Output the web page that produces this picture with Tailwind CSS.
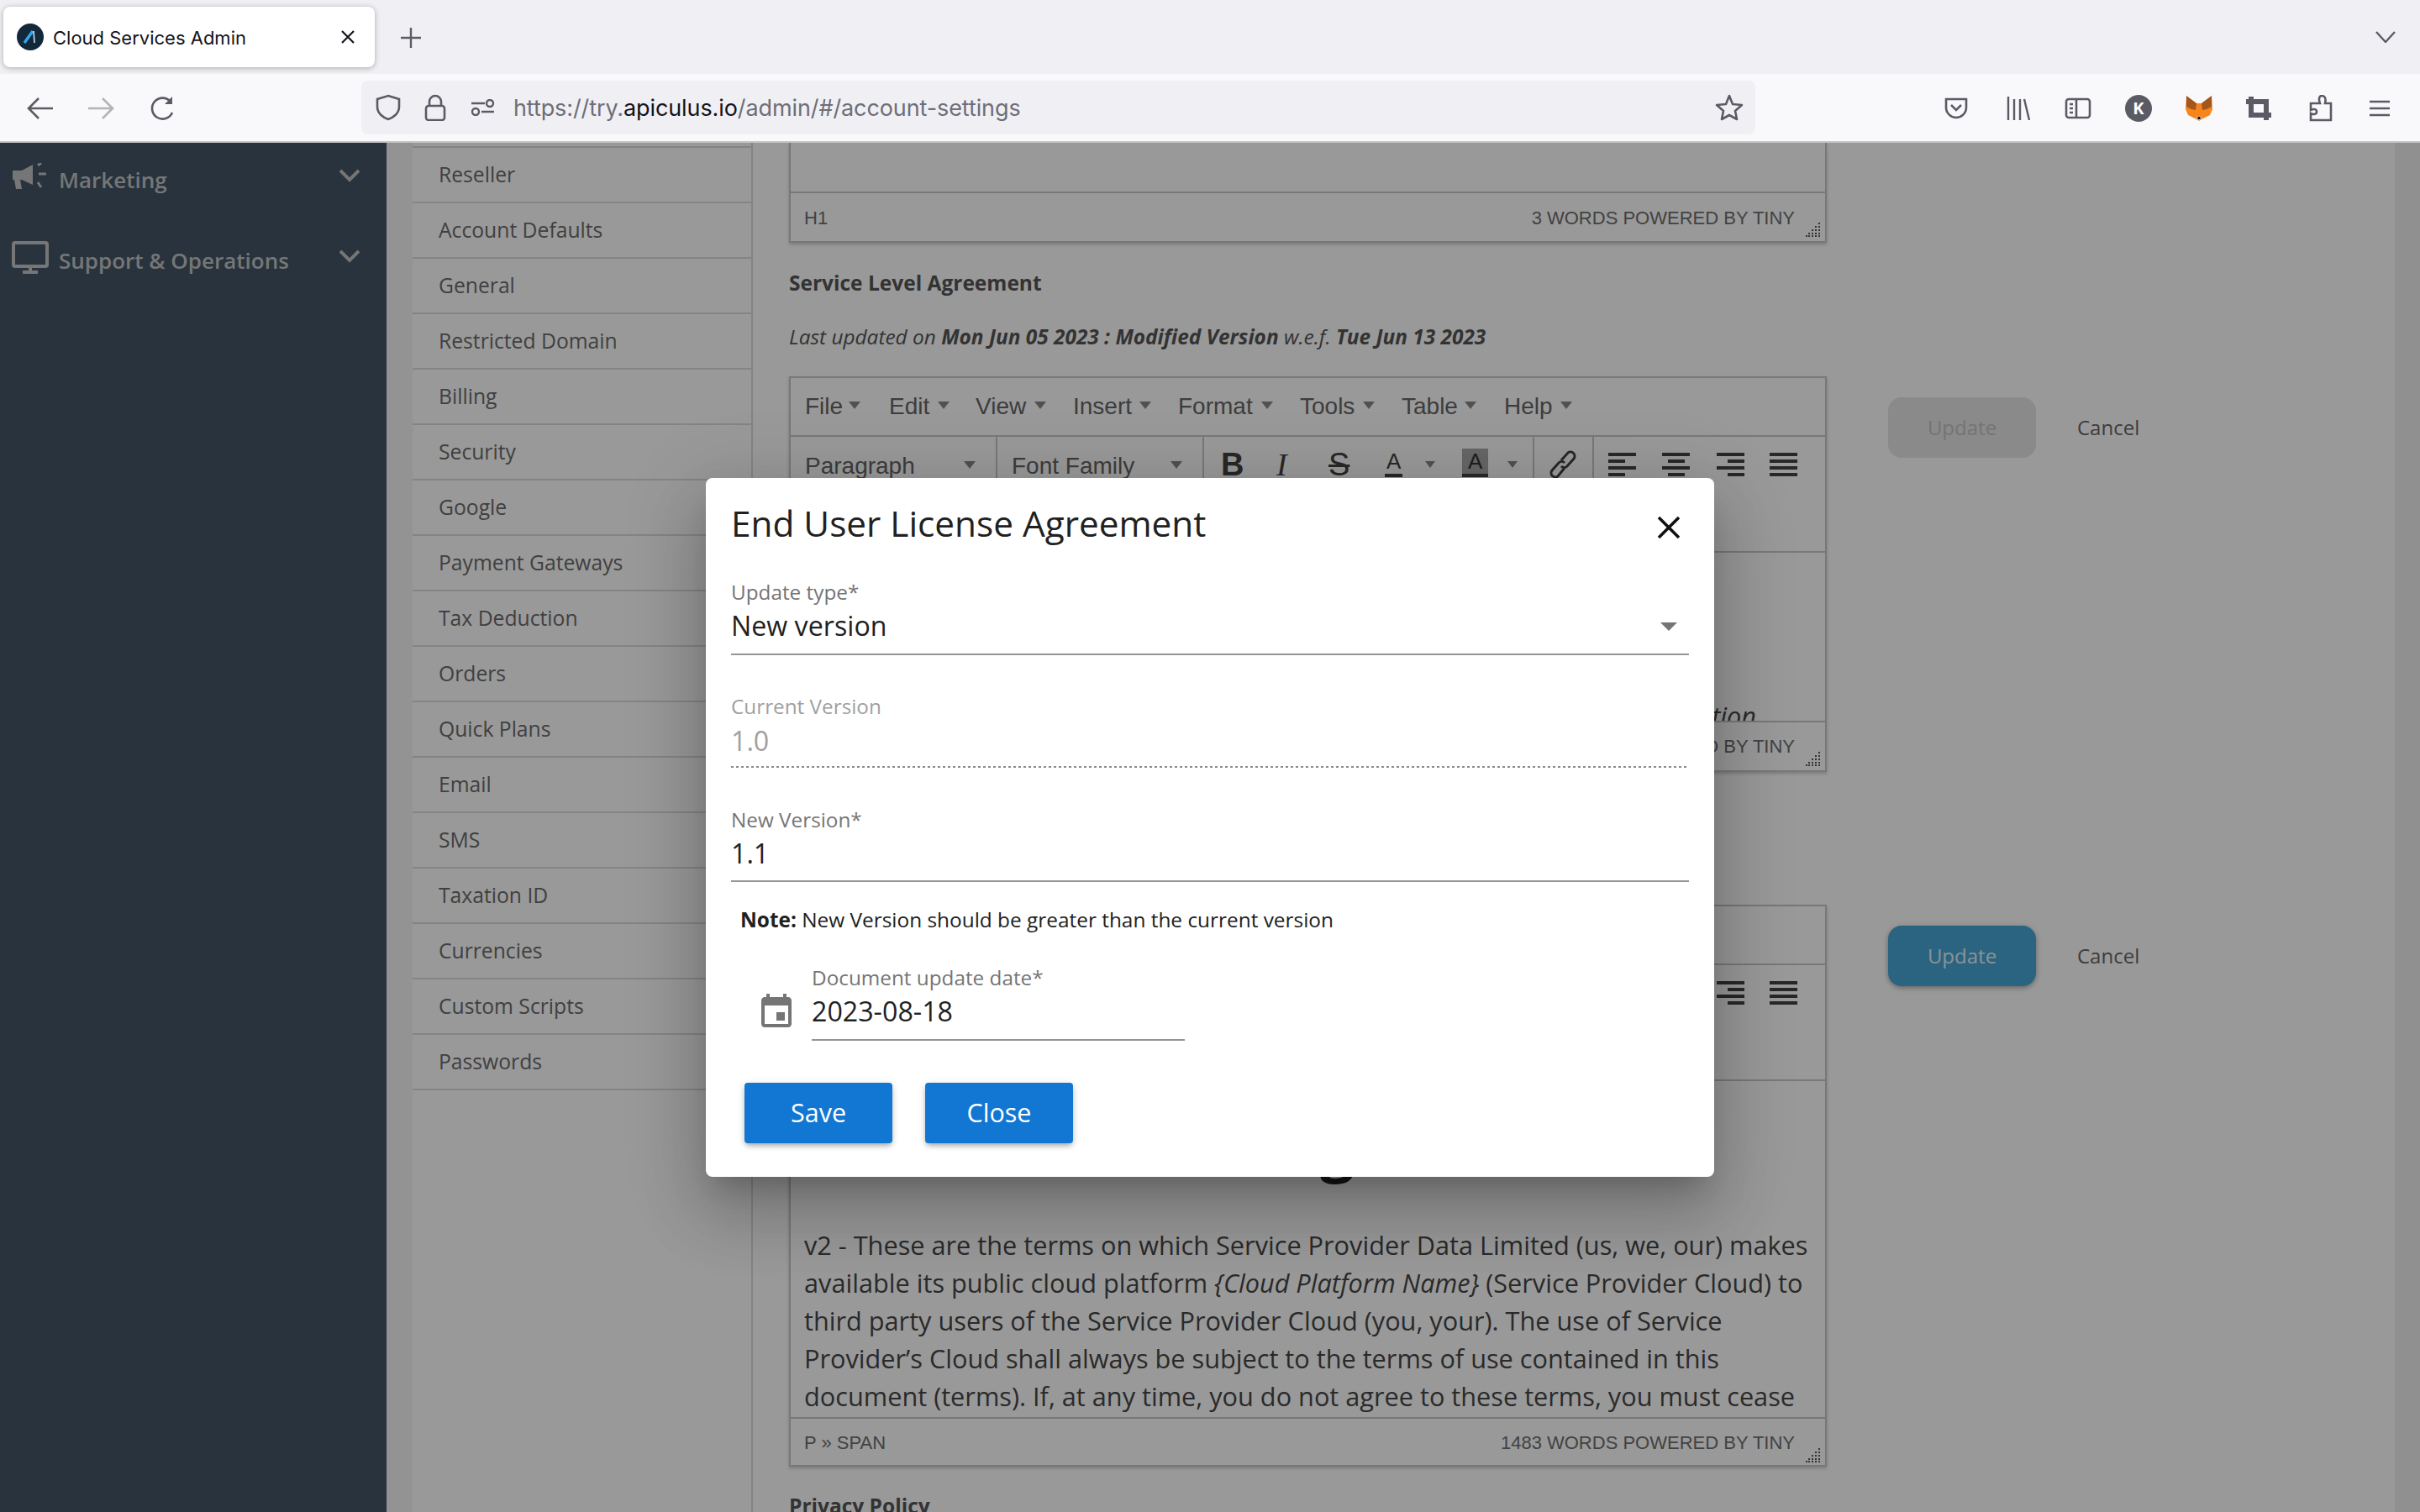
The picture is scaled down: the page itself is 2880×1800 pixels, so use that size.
<!DOCTYPE html>
<html><head><meta charset="utf-8"><script src="https://cdn.jsdelivr.net/npm/@tailwindcss/browser@4"></script></head>
<body class="w-[2880px] h-[1800px] overflow-hidden bg-white font-['Open_Sans',sans-serif]">
<!-- tab strip -->
<div class="h-[88px] bg-[#f0f0f4] flex items-start relative font-['Inter',sans-serif]">
  <div class="ml-[4px] mt-[8px] w-[442px] h-[72px] rounded-[8px] bg-white shadow-[0_1px_6px_rgba(0,0,0,.3)] flex items-center pl-[16px]">
    <svg class="w-[32px] h-[32px]" viewBox="0 0 32 32"><circle cx="16" cy="16" r="16" fill="#14283c"/><path d="M9 23 L19 9" fill="none" stroke="#2fa8ec" stroke-width="3.4"/><path d="M20 9 L21 23" fill="none" stroke="#bfe4f8" stroke-width="1.6"/></svg>
    <span class="ml-[11px] mt-[2px] text-[22px] text-[#15141a] whitespace-nowrap">Cloud Services Admin</span>
    <svg class="ml-auto mr-[22px] w-[20px] h-[20px]" viewBox="0 0 20 20"><path d="M3 3 17 17M17 3 3 17" stroke="#15141a" stroke-width="2.2"/></svg>
  </div>
  <svg class="ml-[31px] mt-[33px] w-[24px] h-[24px]" viewBox="0 0 24 24"><path d="M12 0V24M0 12H24" stroke="#5b5b66" stroke-width="2.4"/></svg>
  <svg class="absolute left-[2827px] top-[37px] w-[24px] h-[14px]" viewBox="0 0 24 14"><path d="M1 1 12 13 23 1" fill="none" stroke="#5b5b66" stroke-width="2.4"/></svg>
</div>
<!-- nav bar -->
<div class="h-[82px] pt-[2px] bg-[#f9f9fb] border-b-2 border-[#c4c4c4] flex items-center text-[#5b5b66]">
  <svg class="ml-[32px] w-[32px] h-[28px]" viewBox="0 0 32 28" fill="none" stroke="#5b5b66" stroke-width="2.6"><path d="M31 14H2M14 2 2 14l12 12"/></svg>
  <svg class="ml-[40px] w-[32px] h-[28px]" viewBox="0 0 32 28" fill="none" stroke="#b3b3b8" stroke-width="2.6"><path d="M1 14H30M18 2 30 14 18 26"/></svg>
  <svg class="ml-[42px] w-[32px] h-[32px]" viewBox="0 0 32 32" fill="none" stroke="#5b5b66" stroke-width="2.6"><path d="M27 21A12.5 12.5 0 1 1 25 8"/><path d="M27 2V11H18" fill="#5b5b66" stroke="none"/></svg>
  <div class="ml-[220px] -mt-[2px] w-[1659px] h-[64px] rounded-[8px] bg-[#f0f0f4] flex items-center relative">
    <svg class="ml-[17px] w-[30px] h-[32px]" viewBox="0 0 30 32" fill="none" stroke="#5b5b66" stroke-width="2.6"><path d="M15 2 28 6V15C28 23 21 28 15 30 9 28 2 23 2 15V6Z"/></svg>
    <svg class="ml-[28px] w-[26px] h-[32px]" viewBox="0 0 26 32" fill="none" stroke="#5b5b66" stroke-width="2.6"><rect x="2" y="14" width="22" height="17" rx="3"/><path d="M6 14V9a7 7 0 0 1 14 0v5"/></svg>
    <svg class="ml-[29px] w-[29px] h-[20px]" viewBox="0 0 29 20" fill="none" stroke="#5b5b66" stroke-width="2.4"><path d="M1 5H17M13 15H28"/><circle cx="23" cy="5" r="4"/><circle cx="6" cy="15" r="4"/></svg>
    <span class="ml-[22px] mt-[2px] text-[27px] tracking-[-.1px] whitespace-nowrap text-[#6e6e78] font-['Inter',sans-serif]">https://try.<span class="text-[#15141a]">apiculus.io</span>/admin/#/account-settings</span>
    <svg class="absolute left-[1611px] top-[16px] w-[34px] h-[32px]" viewBox="0 0 34 32" fill="none" stroke="#5b5b66" stroke-width="2.6" stroke-linejoin="round"><path d="M17 2 21 12 32 13 24 20 26 30 17 25 8 30 10 20 2 13 13 12Z"/></svg>
  </div>
  <svg class="ml-[225px] w-[28px] h-[26px]" viewBox="0 0 28 26" fill="none" stroke="#5b5b66" stroke-width="2.6"><path d="M2 2H26V12C26 19 20 24 14 24 8 24 2 19 2 12Z"/><path d="M8 9 14 15 20 9"/></svg>
  <svg class="ml-[46px] w-[28px] h-[28px]" viewBox="0 0 28 28" fill="none" stroke="#5b5b66" stroke-width="2.4"><path d="M2 0V28M9 3V28M16 3V28M21 3 27 28"/></svg>
  <svg class="ml-[41px] w-[32px] h-[26px]" viewBox="0 0 32 26" fill="none" stroke="#5b5b66" stroke-width="2.6"><rect x="2" y="2" width="28" height="22" rx="3"/><path d="M14 2V24"/><path d="M6 8H10M6 13H10M6 18H10"/></svg>
  <div class="ml-[40px] w-[32px] h-[32px] rounded-full bg-[#5b5b66] text-white text-[20px] font-bold flex items-center justify-center">K</div>
  <svg class="ml-[40px] w-[32px] h-[30px]" viewBox="0 0 32 30"><path d="M1 0 13 9H19L31 0 32 16 29 23 21 27 16 30 11 27 3 23 0 16Z" fill="#f6851b"/><path d="M1 0 13 9 12 17 7 16 1 13ZM31 0 19 9 20 17 25 16 31 13Z" fill="#a3561e"/><path d="M12 26 16 30 20 26 16 24Z" fill="#d7c1b3"/><path d="M14.5 25H17.5V28H14.5Z" fill="#111"/></svg>
  <svg class="ml-[40px] w-[30px] h-[28px]" viewBox="0 0 30 28" fill="none" stroke="#5b5b66" stroke-width="6"><path d="M0 6H24V28M6 0V22H30"/></svg>
  <svg class="ml-[45px] w-[28px] h-[32px]" viewBox="0 0 28 32" fill="none" stroke="#5b5b66" stroke-width="2.6"><path d="M2 30H26V10H19C21 2 17 1 15 1 12 1 11 5 13 10H2V18C6 16 9 17 9 20 9 23 6 24 2 22Z"/></svg>
  <svg class="ml-[43px] w-[26px] h-[20px]" viewBox="0 0 26 20" stroke="#5b5b66" stroke-width="2.6"><path d="M1 2H25M1 10H25M1 18H25"/></svg>
</div>
<!-- page -->
<div class="relative h-[1630px] overflow-hidden flex bg-white">
  <aside class="w-[460px] shrink-0 bg-[#445566] text-[#c5c5c5] text-[26px] font-semibold">
    <div class="h-[80px] flex items-center relative pl-[70px] mt-[4px]">
      <svg class="absolute left-[15px] top-[20px] w-[42px] h-[32px]" viewBox="0 0 42 32" fill="#c5c5c5"><path d="M0 9H11L24 2V26L11 20H9L11 31H4L2 20H0Z"/><path d="M30 3 34 0M31 13H40M30 23 34 29" stroke="#c5c5c5" stroke-width="3"/></svg>
      Marketing
      <svg class="absolute left-[404px] top-[27px] w-[24px] h-[16px]" viewBox="0 0 24 16" fill="none" stroke="#c5c5c5" stroke-width="4"><path d="M1 2 12 13 23 2"/></svg>
    </div>
    <div class="h-[80px] flex items-center relative pl-[70px] mt-[16px]">
      <svg class="absolute left-[14px] top-[17px] w-[44px] h-[39px]" viewBox="0 0 44 39" fill="none" stroke="#c5c5c5" stroke-width="4"><rect x="2" y="2" width="40" height="28" rx="2"/><path d="M22 30V37M13 37H31"/></svg>
      <span>Support &amp; Operations</span>
      <svg class="absolute left-[404px] top-[27px] w-[24px] h-[16px]" viewBox="0 0 24 16" fill="none" stroke="#c5c5c5" stroke-width="4"><path d="M1 2 12 13 23 2"/></svg>
    </div>
  </aside>
  <div class="w-[31px] shrink-0 bg-[#f6f6f6]"></div>
  <nav class="w-[405px] shrink-0 border-r-2 border-[#dcdcdc] text-[24.7px] text-[#6b6b6b] pt-[4px]">
    <div class="border-t-2 border-[#dcdcdc]"></div>
    <div class="h-[66px] flex items-center pl-[31px] border-b-2 border-[#dcdcdc]">Reseller</div>
    <div class="h-[66px] flex items-center pl-[31px] border-b-2 border-[#dcdcdc]">Account Defaults</div>
    <div class="h-[66px] flex items-center pl-[31px] border-b-2 border-[#dcdcdc]">General</div>
    <div class="h-[66px] flex items-center pl-[31px] border-b-2 border-[#dcdcdc]">Restricted Domain</div>
    <div class="h-[66px] flex items-center pl-[31px] border-b-2 border-[#dcdcdc]">Billing</div>
    <div class="h-[66px] flex items-center pl-[31px] border-b-2 border-[#dcdcdc]">Security</div>
    <div class="h-[66px] flex items-center pl-[31px] border-b-2 border-[#dcdcdc]">Google</div>
    <div class="h-[66px] flex items-center pl-[31px] border-b-2 border-[#dcdcdc]">Payment Gateways</div>
    <div class="h-[66px] flex items-center pl-[31px] border-b-2 border-[#dcdcdc]">Tax Deduction</div>
    <div class="h-[66px] flex items-center pl-[31px] border-b-2 border-[#dcdcdc]">Orders</div>
    <div class="h-[66px] flex items-center pl-[31px] border-b-2 border-[#dcdcdc]">Quick Plans</div>
    <div class="h-[66px] flex items-center pl-[31px] border-b-2 border-[#dcdcdc]">Email</div>
    <div class="h-[66px] flex items-center pl-[31px] border-b-2 border-[#dcdcdc]">SMS</div>
    <div class="h-[66px] flex items-center pl-[31px] border-b-2 border-[#dcdcdc]">Taxation ID</div>
    <div class="h-[66px] flex items-center pl-[31px] border-b-2 border-[#dcdcdc]">Currencies</div>
    <div class="h-[66px] flex items-center pl-[31px] border-b-2 border-[#dcdcdc]">Custom Scripts</div>
    <div class="h-[66px] flex items-center pl-[31px] border-b-2 border-[#dcdcdc]">Passwords</div>
  </nav>
  <main class="flex-1 pl-[43px] text-[#555]">
    <!-- editor 1 tail -->
    <div class="w-[1235px] h-[119px] border-x-2 border-b-2 border-[#c8c8c8] shadow-[0_2px_4px_rgba(0,0,0,.2)] flex flex-col">
      <div class="h-[58px]"></div>
      <div class="h-[59px] pt-[2px] border-t-2 border-[#c8c8c8] flex items-center pl-[16px] pr-[36px] justify-between font-['Liberation_Sans',sans-serif] text-[22px] text-[#6e6e6e] relative">
        <span>H1</span><span>3 WORDS POWERED BY TINY</span>
        <svg class="absolute right-[4px] bottom-[4px] w-[20px] h-[20px]" viewBox="0 0 20 20" fill="#555"><path d="M16 2h2v2h-2zM16 6h2v2h-2zM12 6h2v2h-2zM16 10h2v2h-2zM12 10h2v2h-2zM8 10h2v2H8zM16 14h2v2h-2zM12 14h2v2h-2zM8 14h2v2H8zM4 14h2v2H4zM16 17h2v2h-2zM12 17h2v2h-2zM8 17h2v2H8zM4 17h2v2H4zM1 17h2v2H1z"/></svg>
      </div>
    </div>
    <div class="mt-[31px] h-[34px] leading-[34px] text-[24.5px] font-bold">Service Level Agreement</div>
    <div class="mt-[30px] h-[34px] leading-[34px] text-[24.4px] italic">Last updated on <b>Mon Jun 05 2023 : Modified Version</b> w.e.f. <b>Tue Jun 13 2023</b></div>
    <!-- editor 2 -->
    <div class="mt-[30px] flex items-start">
      <div class="w-[1235px] h-[471px] border-2 border-[#c8c8c8] shadow-[0_2px_4px_rgba(0,0,0,.2)] flex flex-col font-['Liberation_Sans',sans-serif] text-[#6e6e6e]">
        <div class="h-[68px] shrink-0 flex items-center text-[28px] text-[#666] relative">
          <span class="absolute left-[17px]">File</span><i class="absolute left-[69px] top-[28px] border-x-[7px] border-t-[9px] border-x-transparent border-t-[#888]"></i>
          <span class="absolute left-[117px]">Edit</span><i class="absolute left-[175px] top-[28px] border-x-[7px] border-t-[9px] border-x-transparent border-t-[#888]"></i>
          <span class="absolute left-[220px]">View</span><i class="absolute left-[290px] top-[28px] border-x-[7px] border-t-[9px] border-x-transparent border-t-[#888]"></i>
          <span class="absolute left-[336px]">Insert</span><i class="absolute left-[415px] top-[28px] border-x-[7px] border-t-[9px] border-x-transparent border-t-[#888]"></i>
          <span class="absolute left-[461px]">Format</span><i class="absolute left-[560px] top-[28px] border-x-[7px] border-t-[9px] border-x-transparent border-t-[#888]"></i>
          <span class="absolute left-[606px]">Tools</span><i class="absolute left-[681px] top-[28px] border-x-[7px] border-t-[9px] border-x-transparent border-t-[#888]"></i>
          <span class="absolute left-[727px]">Table</span><i class="absolute left-[802px] top-[28px] border-x-[7px] border-t-[9px] border-x-transparent border-t-[#888]"></i>
          <span class="absolute left-[849px]">Help</span><i class="absolute left-[916px] top-[28px] border-x-[7px] border-t-[9px] border-x-transparent border-t-[#888]"></i>
        </div>
        <div class="h-[138px] shrink-0 border-t-2 border-[#c8c8c8] relative text-[28px] text-[#666]">
          <span class="absolute left-[17px] top-[14px]">Paragraph</span><i class="absolute left-[206px] top-[29px] border-x-[7px] border-t-[9px] border-x-transparent border-t-[#888]"></i>
          <div class="absolute left-[244px] top-0 h-[136px] w-[2px] bg-[#c8c8c8]"></div>
          <span class="absolute left-[263px] top-[14px]">Font Family</span><i class="absolute left-[452px] top-[29px] border-x-[7px] border-t-[9px] border-x-transparent border-t-[#888]"></i>
          <div class="absolute left-[490px] top-0 h-[136px] w-[2px] bg-[#c8c8c8]"></div>
          <span class="absolute left-[512px] top-[14px] text-[38px] leading-[38px] font-bold text-[#444]">B</span>
          <span class="absolute left-[578px] top-[14px] text-[38px] leading-[38px] italic text-[#444] font-['Liberation_Serif',serif]">I</span>
          <span class="absolute left-[640px] top-[14px] text-[38px] leading-[38px] line-through text-[#444]">S</span>
          <span class="absolute left-[707px] top-[14px] text-[26px] text-[#444] border-b-4 border-[#444] leading-[30px] px-[2px]">A</span><i class="absolute left-[755px] top-[29px] border-x-[6px] border-t-[8px] border-x-transparent border-t-[#888]"></i>
          <span class="absolute left-[799px] top-[14px] text-[26px] text-[#333] bg-[#aaa] border-b-4 border-[#444] leading-[30px] px-[7px]">A</span><i class="absolute left-[853px] top-[29px] border-x-[6px] border-t-[8px] border-x-transparent border-t-[#888]"></i>
          <div class="absolute left-[883px] top-0 h-[136px] w-[2px] bg-[#c8c8c8]"></div>
          <svg class="absolute left-[903px] top-[16px] w-[32px] h-[34px]" viewBox="0 0 32 34" fill="none" stroke="#444" stroke-width="3"><path d="M14 12 22 3a5 5 0 0 1 7 7l-8 9a5 5 0 0 1-7 0"/><path d="M18 21 10 31a5 5 0 0 1-7-7l8-9a5 5 0 0 1 7 0"/></svg>
          <div class="absolute left-[954px] top-0 h-[136px] w-[2px] bg-[#c8c8c8]"></div>
          <svg class="absolute left-[973px] top-[19px] w-[33px] h-[28px]" viewBox="0 0 33 28" fill="#444"><path d="M0 0h33v4H0zM0 8h20v4H0zM0 16h33v4H0zM0 24h20v4H0z"/></svg>
          <svg class="absolute left-[1037px] top-[19px] w-[33px] h-[28px]" viewBox="0 0 33 28" fill="#444"><path d="M0 0h33v4H0zM7 8h20v4H7zM0 16h33v4H0zM7 24h20v4H7z"/></svg>
          <svg class="absolute left-[1102px] top-[19px] w-[33px] h-[28px]" viewBox="0 0 33 28" fill="#444"><path d="M0 0h33v4H0zM13 8h20v4H13zM0 16h33v4H0zM13 24h20v4H13z"/></svg>
          <svg class="absolute left-[1165px] top-[19px] w-[33px] h-[28px]" viewBox="0 0 33 28" fill="#444"><path d="M0 0h33v4H0zM0 8h33v4H0zM0 16h33v4H0zM0 24h33v4H0z"/></svg>
        </div>
        <div class="h-[202px] shrink-0 border-t-2 border-[#c8c8c8] overflow-hidden flex flex-col justify-end items-end pr-[82px]">
          <span class="text-[30.7px] italic text-[#474747] font-['Open_Sans',sans-serif] leading-[45px] mb-[-17px]">Cloud Platform Administration</span>
        </div>
        <div class="h-[59px] shrink-0 border-t-2 border-[#c8c8c8] flex items-center pl-[16px] pr-[36px] justify-between text-[22px] relative">
          <span>P</span><span>7 WORDS POWERED BY TINY</span>
          <svg class="absolute right-[4px] bottom-[4px] w-[20px] h-[20px]" viewBox="0 0 20 20" fill="#555"><path d="M16 2h2v2h-2zM16 6h2v2h-2zM12 6h2v2h-2zM16 10h2v2h-2zM12 10h2v2h-2zM8 10h2v2H8zM16 14h2v2h-2zM12 14h2v2h-2zM8 14h2v2H8zM4 14h2v2H4zM16 17h2v2h-2zM12 17h2v2h-2zM8 17h2v2H8zM4 17h2v2H4zM1 17h2v2H1z"/></svg>
        </div>
      </div>
      <div class="ml-[73px] mt-[25px] flex items-center">
        <div class="w-[176px] h-[72px] rounded-[16px] bg-[#e6e6e6] text-[#c2c2c2] text-[24px] flex items-center justify-center">Update</div>
        <div class="ml-[49px] text-[24px] text-[#666]">Cancel</div>
      </div>
    </div>
    <div class="mt-[32px] h-[34px] leading-[34px] text-[24.5px] font-bold">End User License Agreement</div>
    <div class="mt-[30px] h-[34px] leading-[34px] text-[24.4px] italic">Last updated on <b>Mon Jun 05 2023</b></div>
    <!-- editor 3 -->
    <div class="mt-[28px] flex items-start">
      <div class="w-[1235px] h-[669px] border-2 border-[#c8c8c8] shadow-[0_2px_4px_rgba(0,0,0,.2)] flex flex-col font-['Liberation_Sans',sans-serif] text-[#6e6e6e]">
        <div class="h-[68px] shrink-0"></div>
        <div class="h-[138px] shrink-0 border-t-2 border-[#c8c8c8] relative">
          <svg class="absolute left-[1102px] top-[19px] w-[33px] h-[28px]" viewBox="0 0 33 28" fill="#444"><path d="M0 0h33v4H0zM13 8h20v4H13zM0 16h33v4H0zM13 24h20v4H13z"/></svg>
          <svg class="absolute left-[1165px] top-[19px] w-[33px] h-[28px]" viewBox="0 0 33 28" fill="#444"><path d="M0 0h33v4H0zM0 8h33v4H0zM0 16h33v4H0zM0 24h33v4H0z"/></svg>
        </div>
        <div class="h-[402px] shrink-0 border-t-2 border-[#c8c8c8] overflow-hidden flex flex-col justify-end pl-[16px] text-[30.7px] leading-[45px] text-[#474747] font-['Open_Sans',sans-serif] whitespace-nowrap">
          <div class="h-[62px] mb-[64px] pl-[614px] text-[72px] font-bold leading-[62px] text-[#222]">g</div>
          <div class="h-[225px] mb-[2px]">v2 - These are the terms on which Service Provider Data Limited (us, we, our) makes<br>available its public cloud platform <i>{Cloud Platform Name}</i> (Service Provider Cloud) to<br>third party users of the Service Provider Cloud (you, your). The use of Service<br>Provider’s Cloud shall always be subject to the terms of use contained in this<br>document (terms). If, at any time, you do not agree to these terms, you must cease</div>
        </div>
        <div class="h-[59px] shrink-0 border-t-2 border-[#c8c8c8] flex items-center pl-[16px] pr-[36px] justify-between text-[22px] relative">
          <span>P » SPAN</span><span>1483 WORDS POWERED BY TINY</span>
          <svg class="absolute right-[4px] bottom-[4px] w-[20px] h-[20px]" viewBox="0 0 20 20" fill="#555"><path d="M16 2h2v2h-2zM16 6h2v2h-2zM12 6h2v2h-2zM16 10h2v2h-2zM12 10h2v2h-2zM8 10h2v2H8zM16 14h2v2h-2zM12 14h2v2h-2zM8 14h2v2H8zM4 14h2v2H4zM16 17h2v2h-2zM12 17h2v2h-2zM8 17h2v2H8zM4 17h2v2H4zM1 17h2v2H1z"/></svg>
        </div>
      </div>
      <div class="ml-[73px] mt-[25px] flex items-center">
        <div class="w-[176px] h-[72px] rounded-[16px] bg-[#47a7d5] text-[#e8f4fa] text-[24px] flex items-center justify-center shadow-[0_2px_6px_rgba(0,0,0,.35)]">Update</div>
        <div class="ml-[49px] text-[24px] text-[#666]">Cancel</div>
      </div>
    </div>
    <div class="mt-[30px] h-[34px] leading-[34px] text-[24.5px] font-bold">Privacy Policy</div>
  </main>
  <div class="w-[30px] shrink-0 bg-[#eef0ee]"></div>
  <!-- backdrop -->
  <div class="absolute inset-0 bg-black/40"></div>
  <!-- modal -->
  <div class="absolute left-[840px] top-[399px] w-[1200px] h-[832px] bg-white rounded-[8px] px-[30px] shadow-[0_22px_30px_-14px_rgba(0,0,0,.2),0_48px_76px_6px_rgba(0,0,0,.14),0_18px_92px_16px_rgba(0,0,0,.12)]">
    <div class="h-[121px] pt-[32px] flex items-start justify-between">
      <div class="text-[42.3px] leading-[44px] text-[#212121]">End User License Agreement</div>
      <svg class="mt-[13px] mr-[10px] w-[28px] h-[28px]" viewBox="0 0 28 28"><path d="M2 2 26 26M26 2 2 26" stroke="#111" stroke-width="3.6"/></svg>
    </div>
    <div class="h-[90px] border-b-2 border-[#949494] relative">
      <div class="relative -top-[2px] h-[34px] leading-[34px] text-[24.3px] text-[#757575]">Update type*</div>
      <div class="relative -top-[2px] h-[46px] leading-[46px] text-[32.2px] text-[#212121]">New version</div>
      <i class="absolute right-[14px] top-[51px] border-x-[10px] border-t-[10px] border-x-transparent border-t-[#757575]"></i>
    </div>
    <div class="mt-[45px] h-[89px] relative">
      <div class="relative -top-[1px] h-[34px] leading-[34px] text-[24.3px] text-[#a0a0a0]">Current Version</div>
      <div class="h-[46px] leading-[46px] text-[32.2px] text-[#a0a0a0]">1.0</div>
      <div class="absolute left-0 right-0 bottom-0 h-[2px] bg-[repeating-linear-gradient(90deg,#8c8c8c_0_3px,transparent_3px_6px)]"></div>
    </div>
    <div class="mt-[45px] h-[91px] border-b-2 border-[#949494]">
      <div class="h-[34px] leading-[34px] text-[24.3px] text-[#757575]">New Version*</div>
      <div class="h-[46px] leading-[46px] text-[32.2px] text-[#212121]">1.1</div>
    </div>
    <div class="relative -top-[2px] mt-[30px] ml-[11px] h-[34px] leading-[34px] text-[24.4px] text-[#212121]"><b class="font-bold">Note:</b> New Version should be greater than the current version</div>
    <div class="mt-[35px] flex items-start ml-[30px]">
      <svg class="mt-[32px] w-[48px] h-[48px]" viewBox="0 0 24 24" fill="#757575"><path d="M17 12h-5v5h5v-5zM16 1v2H8V1H6v2H5c-1.11 0-1.99.9-1.99 2L3 19c0 1.1.89 2 2 2h14c1.1 0 2-.9 2-2V5c0-1.1-.9-2-2-2h-1V1h-2zm3 18H5V8h14v11z"/></svg>
      <div class="ml-[18px] w-[444px] h-[90px] border-b-2 border-[#949494]">
        <div class="relative -top-[2px] h-[34px] leading-[34px] text-[24.3px] text-[#757575]">Document update date*</div>
        <div class="relative -top-[2px] h-[46px] leading-[46px] text-[32.2px] text-[#212121]">2023-08-18</div>
      </div>
    </div>
    <div class="mt-[50px] ml-[16px] flex gap-[39px]">
      <div class="w-[176px] h-[72px] rounded-[4px] bg-[#1276d3] text-white text-[30.5px] flex items-center justify-center shadow-[0_4px_6px_-2px_rgba(0,0,0,.3),0_2px_10px_rgba(0,0,0,.15)]">Save</div>
      <div class="w-[176px] h-[72px] rounded-[4px] bg-[#1276d3] text-white text-[30.5px] flex items-center justify-center shadow-[0_4px_6px_-2px_rgba(0,0,0,.3),0_2px_10px_rgba(0,0,0,.15)]">Close</div>
    </div>
  </div>
</div>
</body></html>
